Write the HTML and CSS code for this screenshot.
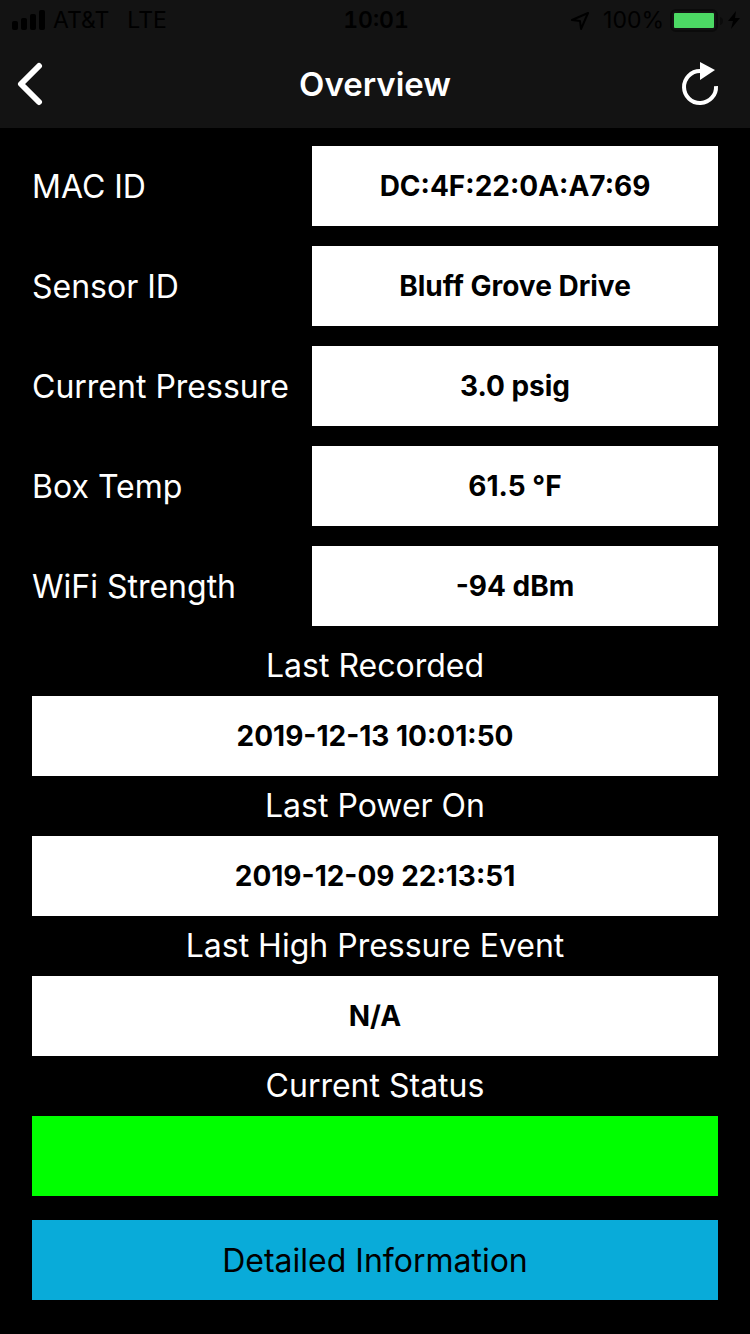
FILE: index.html
```html
<!DOCTYPE html>
<html lang="en">
<head>
    <meta charset="UTF-8" />
    <meta name="viewport" content="width=device-width, initial-scale=1.0"/>
    <title>Overview</title>

    <link rel="stylesheet" href="styles.css">
</head>

<body>

<header class="top">
    <div class="status-bar">
        <div class="status-left">
            <svg class="signal" width="33" height="20" viewBox="0 0 33 20" aria-hidden="true">
                <rect x="0" y="11" width="6" height="9" rx="2"/>
                <rect x="9" y="8" width="6" height="12" rx="2"/>
                <rect x="18" y="4" width="6" height="16" rx="2"/>
                <rect x="27" y="0" width="6" height="20" rx="2"/>
            </svg>
            <span>AT&amp;T</span>
            <span class="network">LTE</span>
        </div>
        <time class="clock">10:01</time>
        <div class="status-right">
            <svg class="location" width="20" height="20" viewBox="0 0 20 20" aria-hidden="true">
                <path d="M18 3L2 10L10 11L11 19Z" fill="none" stroke="#000" stroke-width="2" stroke-linejoin="round"/>
            </svg>
            <span>100%</span>
            <svg class="battery" width="54" height="24" viewBox="0 0 54 24" aria-hidden="true">
                <rect x="2" y="2" width="46" height="21" rx="5" fill="none" stroke="#0b0b0b" stroke-width="2"/>
                <rect x="5" y="5" width="40" height="15" rx="1" fill="#4cd964"/>
                <path d="M51 9Q54 10 54 13Q54 16 51 17Z" fill="#0b0b0b"/>
            </svg>
            <svg class="bolt" width="12" height="18" viewBox="0 0 12 18" aria-hidden="true">
                <path d="M8 0L0 10H5L3 18L12 7H7Z"/>
            </svg>
        </div>
    </div>

    <nav class="nav-bar">
        <button class="icon-btn" type="button" aria-label="Back">
            <svg width="26" height="44" viewBox="0 0 26 44" aria-hidden="true">
                <path d="M22 4L4 22L22 40" fill="none" stroke="#fff" stroke-width="6" stroke-linecap="round" stroke-linejoin="round"/>
            </svg>
        </button>
        <h1>Overview</h1>
        <button class="icon-btn" type="button" aria-label="Refresh">
            <svg width="38" height="44" viewBox="0 0 38 44" aria-hidden="true">
                <path d="M35 24A16 16 0 1 1 19 9" fill="none" stroke="#fff" stroke-width="4"/>
                <path d="M19 0L34 8L19 18Z" fill="#fff"/>
            </svg>
        </button>
    </nav>
</header>

<main class="content">
    <!-- sensor readings -->
    <dl class="readings">
        <dt>MAC ID</dt>
        <dd class="value">DC:4F:22:0A:A7:69</dd>
        <dt>Sensor ID</dt>
        <dd class="value">Bluff Grove Drive</dd>
        <dt>Current Pressure</dt>
        <dd class="value">3.0 psig</dd>
        <dt>Box Temp</dt>
        <dd class="value">61.5 °F</dd>
        <dt>WiFi Strength</dt>
        <dd class="value">-94 dBm</dd>
    </dl>

    <!-- events -->
    <dl class="events">
        <dt>Last Recorded</dt>
        <dd class="value">2019-12-13 10:01:50</dd>
        <dt>Last Power On</dt>
        <dd class="value">2019-12-09 22:13:51</dd>
        <dt>Last High Pressure Event</dt>
        <dd class="value">N/A</dd>
        <dt>Current Status</dt>
        <dd class="value ok" aria-label="OK"></dd>
    </dl>

    <button class="main-btn" type="button">Detailed Information</button>
</main>

</body>
</html>
```
FILE: styles.css
```css
:root {
    --bg: #000000;
    --bar: #131313;
    --text: #ffffff;
    --ok: #00ff00;
    --primary: #09abd9;
}

* {
    box-sizing: border-box;
    margin: 0;
    padding: 0;
}

body {
    min-height: 100vh;
    background: var(--bg);
    font-family: Inter, 'Liberation Sans', sans-serif;
    font-size: 32px;
    color: var(--text);
}

button {
    border: none;
    font: inherit;
    cursor: pointer;
}

svg {
    display: block;
    flex: none;
}

/* =========================
   TOP BARS
========================= */
.top {
    background: var(--bar);
}

.status-bar {
    display: grid;
    grid-template-columns: 1fr auto 1fr;
    align-items: center;
    height: 40px;
    padding: 0 10px 0 12px;
    font-size: 23px;
    line-height: 40px;
    color: #000;
}

.status-left,
.status-right {
    display: flex;
    align-items: center;
    gap: 8px;
}

.status-right {
    justify-content: flex-end;
    gap: 5px;
}

.network { margin-left: 10px; }

.clock {
    font-weight: 600;
    font-variant-numeric: tabular-nums;
}

.location { margin-right: 8px; }

.nav-bar {
    display: flex;
    align-items: center;
    justify-content: space-between;
    height: 88px;
    padding: 0 17px;
}

.nav-bar h1 {
    font-size: 33px;
    font-weight: 600;
}

.icon-btn {
    display: flex;
    width: 52px;
    background: none;
}

/* =========================
   READINGS
========================= */
.content {
    padding: 18px 32px 34px;
}

.readings {
    display: grid;
    grid-template-columns: 260px 1fr;
    gap: 20px;
    align-items: center;
    white-space: nowrap;
}

.value {
    height: 80px;
    background: #fff;
    color: #000;
    font-size: 28px;
    font-weight: 700;
    line-height: 80px;
    text-align: center;
}

.events {
    margin-top: 10px;
    text-align: center;
}

.events dt { line-height: 60px; }

.value.ok { background: var(--ok); }

.main-btn {
    display: block;
    width: 100%;
    height: 80px;
    margin-top: 24px;
    background: var(--primary);
    color: #000;
}
```
